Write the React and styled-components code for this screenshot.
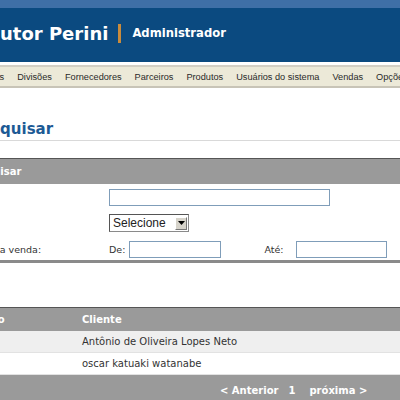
import React from 'react';
import styled, { createGlobalStyle } from 'styled-components';

const GlobalStyle = createGlobalStyle`
  *, *::before, *::after { box-sizing: border-box; }
  body {
    margin: 0;
    overflow: hidden;
    background: #fff;
    font-family: "DejaVu Sans", Verdana, sans-serif;
    color: #333;
  }
`;

const Page = styled.div`
  width: 400px;
  height: 400px;
  overflow: hidden;
  white-space: nowrap;
`;

const Header = styled.header`
  height: 62px;
  border-top: 8px solid #3f6fa6;
  background: #0b4a80;
  padding-bottom: 4px;
  display: flex;
  align-items: center;
  color: #fff;
`;

const Brand = styled.span`
  font-size: 18px;
  font-weight: bold;
`;

const Divider = styled.span`
  width: 3px;
  height: 19px;
  background: #c98b3c;
  margin: 0 11px 0 10px;
`;

const Role = styled.span`
  font-size: 11.6px;
  font-weight: bold;
`;

const Menu = styled.nav`
  margin-top: 3px;
  height: 23px;
  border-top: 2px solid #d3cfc4;
  border-bottom: 2px solid #c8c4b7;
  background: #ece9d8;
  display: flex;
  align-items: center;
  gap: 13px;
  font-family: "Liberation Sans", Arial, sans-serif;
  font-size: 9.2px;
  color: #2a2a2a;
  overflow: hidden;
`;

const MenuItem = styled.span`
  flex-shrink: 0;
  margin-left: ${(p) => (p.$cut ? `-${p.$cut}px` : '0')};
`;

const Heading = styled.div`
  margin-top: 32px;
  padding-bottom: 2px;
  border-bottom: 1px solid #d9d9d9;
`;

const Title = styled.h1`
  margin: 0;
  font-size: 15px;
  line-height: 18px;
  font-weight: bold;
  color: #1d5a95;
`;

const Cut = styled.span`
  display: inline-block;
  margin-left: -${(p) => p.$px}px;
`;

const Panel = styled.section`
  margin-top: 17px;
  border-top: 1px solid #555;
`;

const Bar = styled.div`
  height: ${(p) => p.$h || 25}px;
  background: #9a9a9a;
  color: #fff;
  font-size: 10px;
  font-weight: bold;
  display: flex;
  align-items: center;
`;

const Form = styled.div`
  display: grid;
  grid-template-columns: 109px 1fr;
  grid-template-rows: 17px 19px 17px;
  row-gap: 8px;
  padding: 5px 0 2px;
  border-bottom: 3px solid #8a8a8a;
  font-size: 9.5px;
`;

const Label = styled.div`
  display: flex;
  align-items: center;
  overflow: visible;
`;

const Field = styled.div`
  display: flex;
  align-items: ${(p) => (p.$top ? 'flex-start' : 'center')};
`;

const TextInput = styled.div`
  width: ${(p) => p.$w}px;
  height: 17px;
  border: 1px solid #7f9db9;
  background: #fff;
  margin-left: ${(p) => p.$ml || 0}px;
  flex-shrink: 0;
`;

const Select = styled.div`
  width: 80px;
  height: 18px;
  border: 1px solid #8a8a8a;
  border-top-color: #555;
  border-left-color: #555;
  background: #fff;
  display: flex;
  align-items: center;
  justify-content: space-between;
  padding: 0 1px 0 3px;
  font-family: "Liberation Sans", Arial, sans-serif;
  font-size: 12px;
  color: #222;
`;

const SelectButton = styled.span`
  width: 12px;
  height: 13px;
  background: #d6d3ca;
  border: 1px solid;
  border-color: #fff #777 #777 #fff;
  display: flex;
  align-items: center;
  justify-content: center;
`;

const InlineLabel = styled.span`
  margin-left: ${(p) => p.$ml || 0}px;
`;

const Table = styled.section`
  margin-top: 44px;
  border-top: 1px solid #555;
`;

const Row = styled.div`
  display: grid;
  grid-template-columns: 82px 1fr;
  align-items: center;
  height: ${(p) => p.$h || 22}px;
  background: ${(p) => p.$bg};
  color: ${(p) => (p.$head ? '#fff' : '#333')};
  font-size: 10px;
  font-weight: ${(p) => (p.$head ? 'bold' : 'normal')};
  border-bottom: 1px solid ${(p) => p.$line || 'transparent'};
`;

const Cell = styled.div`
  overflow: visible;
`;

const Pager = styled.div`
  height: 30px;
  background: #9a9a9a;
  color: #fff;
  font-size: 10px;
  font-weight: bold;
  display: flex;
  align-items: center;
  padding-left: 220px;
`;

const PagerItem = styled.span`
  margin-left: ${(p) => p.$ml || 0}px;
`;

const menuItems = ['Divisões', 'Fornecedores', 'Parceiros', 'Produtos', 'Usuários do sistema', 'Vendas', 'Opções'];

const vendas = [
  { id: 1, cliente: 'Antônio de Oliveira Lopes Neto' },
  { id: 2, cliente: 'oscar katuaki watanabe' },
];

const App = () => {
  return (
    <Page>
      <GlobalStyle />
      <Header>
        <Brand>utor Perini</Brand>
        <Divider />
        <Role>Administrador</Role>
      </Header>

      <Menu>
        <MenuItem $cut={29}>Clientes</MenuItem>
        {menuItems.map((item) => (
          <MenuItem key={item}>{item}</MenuItem>
        ))}
      </Menu>

      <Heading>
        <Title>
          <Cut $px={30}>Pesquisar</Cut>
        </Title>
      </Heading>

      <Panel>
        <Bar>
          <Cut $px={34}>Pesquisar</Cut>
        </Bar>
        <Form>
          <Label />
          <Field>
            <TextInput $w={221} />
          </Field>
          <Label />
          <Field $top>
            <Select>
              <span>Selecione</span>
              <SelectButton>
                <svg width="7" height="4" viewBox="0 0 7 4">
                  <path d="M0 0h7L3.5 4z" fill="#000" />
                </svg>
              </SelectButton>
            </Select>
          </Field>
          <Label>
            <Cut $px={32}>Data da venda:</Cut>
          </Label>
          <Field>
            <InlineLabel>De:</InlineLabel>
            <TextInput $w={92} $ml={4} />
            <InlineLabel $ml={43}>Até:</InlineLabel>
            <TextInput $w={91} $ml={13} />
          </Field>
        </Form>
      </Panel>

      <Table>
        <Row $head $h={23} $bg="#9a9a9a">
          <Cell>
            <Cut $px={34}>Pedido</Cut>
          </Cell>
          <Cell>Cliente</Cell>
        </Row>
        {vendas.map((v, i) => (
          <Row key={v.id} $bg={i % 2 === 0 ? '#efefef' : '#fff'} $line="#e2e2e2">
            <Cell />
            <Cell>{v.cliente}</Cell>
          </Row>
        ))}
        <Pager>
          <PagerItem>&lt; Anterior</PagerItem>
          <PagerItem $ml={10}>1</PagerItem>
          <PagerItem $ml={14}>próxima &gt;</PagerItem>
        </Pager>
      </Table>
    </Page>
  );
};

export default App;
